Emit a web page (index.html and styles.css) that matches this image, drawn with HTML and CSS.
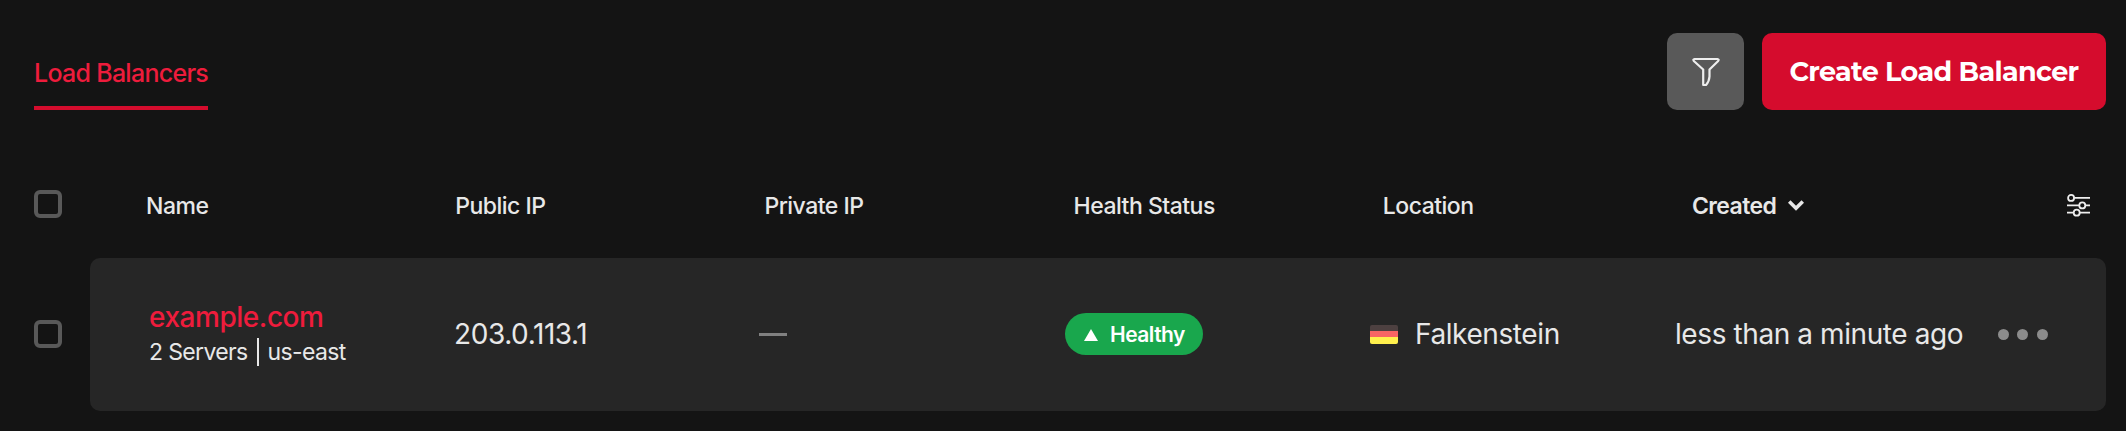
FILE: index.html
```html
<!DOCTYPE html>
<html lang="en">
<head>
<meta charset="utf-8">
<title>Load Balancers</title>
<link rel="stylesheet" href="styles.css">
</head>
<body>
<main class="page">
  <header class="topbar">
    <nav class="tabs"><a class="tab">Load Balancers</a></nav>
    <div class="actions">
      <button class="filter-btn" aria-label="Filter">
        <svg width="28" height="30" viewBox="0 0 28 30" fill="none" stroke="#eee" stroke-width="2.200" stroke-linejoin="round"><path d="M2.600 2H25.400Q27.400 2.200 26.200 4L17.500 12.500V19.500Q17.200 24.500 14 28H11.200V12.500L1.800 4Q.6 2.200 2.600 2Z"/></svg>
      </button>
      <button class="create-btn">Create Load Balancer</button>
    </div>
  </header>
  <section class="table">
    <div class="line head">
      <span class="checkbox"></span>
      <div class="columns">
        <span>Name</span>
        <span>Public IP</span>
        <span>Private IP</span>
        <span>Health Status</span>
        <span>Location</span>
        <span class="sorted">Created
          <svg width="16" height="11" viewBox="0 0 16 11" fill="none" stroke="#e8e8e8" stroke-width="3.600"><path d="M1.200 1.500L8 8.300L14.800 1.500"/></svg>
        </span>
      </div>
      <svg class="settings" width="23" height="23" viewBox="0 0 23 23" fill="none" stroke="#eee" stroke-width="1.800"><path d="M7.200 3.900H23M0 11.400H12M18.500 11.400H23M0 18.700H6.500M13 18.700H23"/><circle cx="4.100" cy="3.900" r="3"/><circle cx="15.300" cy="11.400" r="3"/><circle cx="9.700" cy="18.700" r="3"/></svg>
    </div>
    <div class="line row">
      <span class="checkbox"></span>
      <article class="card">
        <div class="name">
          <a class="host">example.com</a>
          <div class="meta"><span>2 Servers</span><i class="divider"></i><span>us-east</span></div>
        </div>
        <div>203.0.113.1</div>
        <div><i class="dash"></i></div>
        <div class="health"><span class="badge"><svg width="14" height="12" viewBox="0 0 14 12" fill="#fff"><path d="M7 0L14 12H0Z"/></svg>Healthy</span></div>
        <div class="location"><i class="flag"></i>Falkenstein</div>
        <div>less than a minute ago</div>
        <div class="more"><i></i><i></i><i></i></div>
      </article>
    </div>
  </section>
</main>
</body>
</html>
```
FILE: styles.css
```css
* { box-sizing: border-box; }
body { margin: 0; background: #141414; color: #e8e8e8; font-family: Inter, "Liberation Sans", sans-serif; }
.page { height: 431px; padding: 33px 20px 0 34px; overflow: hidden; }
.topbar { display: flex; justify-content: space-between; height: 77px; }
.tabs { display: flex; }
.tab { width: 174px; border-bottom: 4px solid #d50c2d; color: #ee1c3c; font-size: 25px; font-weight: 500; letter-spacing: -0.72px; line-height: 30px; padding-top: 25px; white-space: nowrap; }
.actions { display: flex; gap: 18px; }
button { border: 0; padding: 0; border-radius: 10px; display: flex; align-items: center; justify-content: center; }
.filter-btn { width: 77px; background: #595959; }
.create-btn { width: 344px; background: #d50c2d; color: #fff; font: 700 27px/32px Montserrat, Inter, sans-serif; letter-spacing: -0.66px; white-space: nowrap; }
.line { display: flex; align-items: center; height: 153px; }
.head { height: 148px; padding: 54px 16px 14px 0; font-size: 23px; font-weight: 500; letter-spacing: -0.5px; line-height: 28px; }
.checkbox { width: 28px; height: 28px; border: 4px solid #595959; border-radius: 6px; flex: none; }
.row .checkbox { margin-bottom: 1px; }
.columns { display: grid; grid-template-columns: repeat(6, 309.2px); margin-left: 84px; flex: 1; white-space: nowrap; padding-top: 3px; }
.sorted { display: flex; align-items: center; gap: 12px; font-weight: 600; letter-spacing: -0.6px; }
.settings { flex: none; margin-top: 3px; }
.card { display: grid; grid-template-columns: 305px 305px 306px 305px 305px 323px 1fr; align-items: center; flex: 1; height: 153px; margin-left: 28px; padding: 0 0 1px 59px; background: #262626; border-radius: 10px; white-space: nowrap; font-size: 28px; letter-spacing: -0.41px; line-height: 36px; }
.host { display: block; color: #ee1c3c; font-weight: 500; letter-spacing: -0.45px; line-height: 34px; }
.name { padding-top: 1px; }
.meta { display: flex; align-items: center; font-size: 23px; letter-spacing: -0.64px; line-height: 34px; padding-top: 1px; }
.divider { width: 2px; height: 28px; margin: 0 9px; background: #e8e8e8; }
.dash { display: block; width: 28px; height: 3px; background: #808080; }
.health { display: flex; }
.badge { display: flex; align-items: center; width: 138px; height: 42px; padding: 1px 0 0 19px; gap: 12px; border-radius: 21px; background: #19a74d; color: #fff; font-size: 21px; font-weight: 600; letter-spacing: -0.5px; line-height: 26px; }
.location { display: flex; align-items: center; }
.flag { width: 28px; height: 19px; margin-right: 17px; border-radius: 2px; background: linear-gradient(#4d4040 0 6px, #f76464 6px 12px, #fff04d 12px); }
.more { display: flex; gap: 8.300px; }
.more i { width: 11px; height: 11px; border-radius: 50%; background: #8c8c8c; }
```
